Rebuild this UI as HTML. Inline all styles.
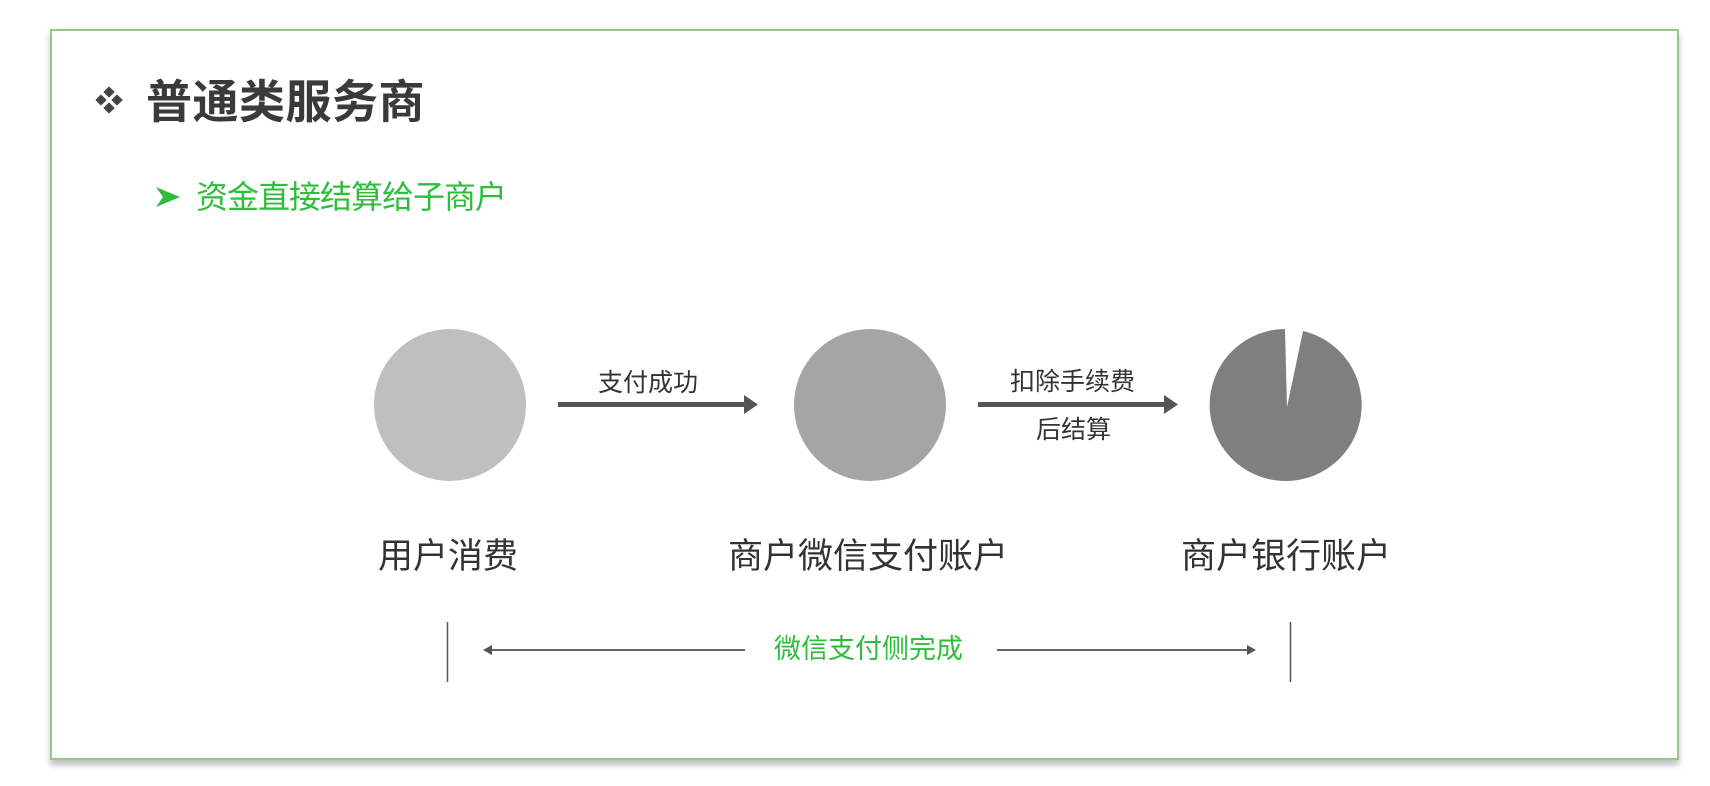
<!DOCTYPE html>
<html><head><meta charset="utf-8"><style>
html,body{margin:0;padding:0;background:#fff;}
body{width:1710px;height:786px;position:relative;overflow:hidden;font-family:"Liberation Sans","Noto Sans CJK SC",sans-serif;}
.frame{position:absolute;left:50px;top:29px;width:1625px;height:727px;border:2px solid #93c985;box-shadow:0 5px 6px rgba(0,0,0,0.25);background:#fff;}
.t{position:absolute;white-space:nowrap;line-height:1;}
</style></head><body>
<div class="frame"></div>
<svg style="position:absolute;left:0;top:0" width="1710" height="786">
 <g fill="#444">
  <rect x="105" y="88" width="8" height="8" transform="rotate(45 109 92)"/>
  <rect x="105" y="104" width="8" height="8" transform="rotate(45 109 108)"/>
  <rect x="97" y="96" width="8" height="8" transform="rotate(45 101 100)"/>
  <rect x="113" y="96" width="8" height="8" transform="rotate(45 117 100)"/>
 </g>
 <path d="M156 187 L180 197 L156 207 L163 197 Z" fill="#2dbe3c"/>
 <circle cx="450" cy="405" r="76" fill="#bfbfbf"/>
 <circle cx="870" cy="405" r="76" fill="#a5a5a5"/>
 <path d="M1287 407 L1303 331 A76 76 0 1 1 1285 329 Z" fill="#7f7f7f"/>
 <rect x="558" y="402" width="190" height="5" fill="#555"/>
 <path d="M744 395 L758 404.5 L744 414 Z" fill="#555"/>
 <rect x="978" y="402" width="190" height="5" fill="#555"/>
 <path d="M1164 395 L1178 404.5 L1164 414 Z" fill="#555"/>
 <line x1="447.5" y1="622" x2="447.5" y2="682" stroke="#555" stroke-width="1.5"/>
 <line x1="1290.5" y1="622" x2="1290.5" y2="682" stroke="#555" stroke-width="1.5"/>
 <line x1="488" y1="650" x2="745" y2="650" stroke="#666" stroke-width="2"/>
 <path d="M483 650 L492 645 L492 655 Z" fill="#555"/>
 <line x1="997" y1="650" x2="1250" y2="650" stroke="#666" stroke-width="2"/>
 <path d="M1256 650 L1247 645 L1247 655 Z" fill="#555"/>
</svg>
<div class="t" style="left:146px;top:79px;font-size:46px;font-weight:bold;color:#3a3a3a;letter-spacing:0.5px;">普通类服务商</div>
<div class="t" style="left:196px;top:181px;font-size:32px;color:#2dbe3c;letter-spacing:-1px;">资金直接结算给子商户</div>
<div class="t" style="left:598px;top:371px;font-size:25px;color:#333;">支付成功</div>
<div class="t" style="left:1010px;top:370px;font-size:25px;color:#333;">扣除手续费</div>
<div class="t" style="left:1036px;top:418px;font-size:25px;color:#333;">后结算</div>
<div class="t" style="left:378px;top:539px;font-size:35px;color:#333;">用户消费</div>
<div class="t" style="left:728px;top:539px;font-size:35px;color:#333;">商户微信支付账户</div>
<div class="t" style="left:1181px;top:539px;font-size:35px;color:#333;">商户银行账户</div>
<div class="t" style="left:774px;top:636px;font-size:27px;color:#2dbe3c;">微信支付侧完成</div>
</body></html>
